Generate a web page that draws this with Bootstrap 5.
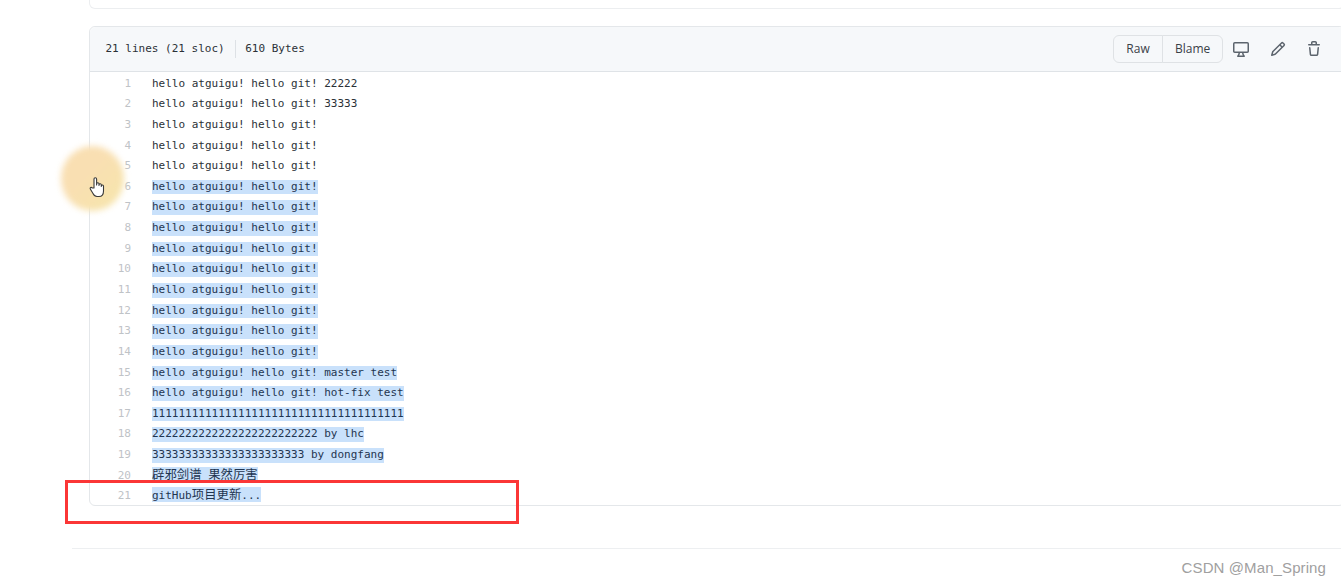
<!DOCTYPE html>
<html lang="zh">
<head>
<meta charset="utf-8">
<title>file</title>
<link href="https://cdn.jsdelivr.net/npm/bootstrap@5.3.0/dist/css/bootstrap.min.css" rel="stylesheet">
<style>
html,body{height:586px;overflow:hidden;background:#fff}
.gh-mono{font-family:"DejaVu Sans Mono","Liberation Mono","Noto Sans CJK SC",monospace;font-size:11px;color:#2b3137}
.gh-stub{height:9px;margin-left:89px;margin-right:-4px;border:1px solid #eceef0;border-top:0;border-radius:0 0 6px 6px;margin-bottom:17px}
.gh-box{margin-left:89px;margin-right:-4px;height:480px;border:1px solid #e4e7ea;border-radius:6px 6px 6px 6px}
.gh-head{height:45px;background:#f6f8fa;border-bottom:1px solid #dfe3e7;border-radius:6px 6px 0 0;padding-left:15.5px;padding-right:22px}
.gh-sep{width:1px;height:18px;background:#dde1e5;margin:0 9.500px 0 10px}
.gh-btns .btn{font-family:"Open Sans","Liberation Sans",sans-serif;font-size:12px;line-height:18px;padding:4px 12px;color:#3a4047;background:#f6f8fa;border-color:#dfe2e5;height:28px}
.gh-btns .btn:first-child{width:50px;border-radius:6px 0 0 6px}
.gh-btns .btn:last-child{width:61px;border-radius:0 6px 6px 0}
.gh-tool{width:16px;height:16px;fill:#5c646d;display:block}
.gh-tools{gap:20.3px;margin-left:10.4px}
.gh-code{padding-top:1.6px}
.gh-line{height:20.65px;line-height:20.65px;white-space:pre}
.gh-no{width:41px;text-align:right;color:#bfc3c7;margin-right:21px;flex:none}
.gh-sel{background:#c9e1fb;color:#1f3550;display:inline-block;line-height:14.5px;height:14.5px}
.gh-sel b,.gh-plain b{font-weight:400;font-family:"Noto Sans CJK SC",sans-serif;font-size:12.4px}
.gh-rule{height:1px;background:#edeff1;margin-left:72px;margin-top:42px}
.gh-water{font-family:"Liberation Sans",Arial,sans-serif;font-size:15px;line-height:18px;color:#a0a0a0;padding-right:15px;margin-top:10px;text-align:right;letter-spacing:.1px}
.gh-redbox{position:absolute;left:65px;top:480px;width:454px;height:44px;border:3px solid #fb3636}
.gh-spot{position:absolute;left:61px;top:146px;width:63px;height:65px;border-radius:50%;background:linear-gradient(135deg,#f9dfb2 40%,#f6e6ab 100%);filter:blur(3px)}
.gh-hand{position:absolute;left:89px;top:176px;width:16px;height:22px}
</style>
</head>
<body>
<div class="gh-stub"></div>
<div class="gh-box gh-mono">
  <div class="gh-head d-flex align-items-center">
    <span>21 lines (21 sloc)</span><span class="gh-sep"></span><span>610 Bytes</span>
    <div class="btn-group gh-btns ms-auto" role="group">
      <button type="button" class="btn">Raw</button>
      <button type="button" class="btn">Blame</button>
    </div>
    <div class="d-flex gh-tools">
      <svg class="gh-tool" viewBox="0 0 16 16"><path fill-rule="evenodd" d="M1.75 2.5h12.5a.25.25 0 01.25.25v7.5a.25.25 0 01-.25.25H1.75a.25.25 0 01-.25-.25v-7.5a.25.25 0 01.25-.25zM14.25 1H1.75A1.75 1.75 0 000 2.75v7.5C0 11.216.784 12 1.75 12h3.727c-.1 1.041-.52 1.872-1.292 2.757A.75.75 0 004.75 16h6.5a.75.75 0 00.565-1.243c-.772-.885-1.192-1.716-1.292-2.757h3.727A1.75 1.75 0 0016 10.25v-7.5A1.75 1.75 0 0014.25 1zM9.018 12H6.982a5.72 5.72 0 01-.765 2.5h3.566a5.72 5.72 0 01-.765-2.5z"/></svg>
      <svg class="gh-tool" viewBox="0 0 16 16"><path fill-rule="evenodd" d="M11.013 1.427a1.75 1.75 0 012.474 0l1.086 1.086a1.75 1.75 0 010 2.474l-8.61 8.61c-.21.21-.47.364-.756.445l-3.251.93a.75.75 0 01-.927-.928l.929-3.25a1.75 1.75 0 01.445-.758l8.61-8.61zm1.414 1.06a.25.25 0 00-.354 0L10.811 3.75l1.439 1.44 1.263-1.263a.25.25 0 000-.354l-1.086-1.086zM11.189 6.25L9.75 4.81l-6.286 6.287a.25.25 0 00-.064.108l-.558 1.953 1.953-.558a.249.249 0 00.108-.064l6.286-6.286z"/></svg>
      <svg class="gh-tool" viewBox="0 0 16 16"><path fill-rule="evenodd" d="M6.5 1.75a.25.25 0 01.25-.25h2.5a.25.25 0 01.25.25V3h-3V1.75zm4.5 0V3h2.25a.75.75 0 010 1.5H2.75a.75.75 0 010-1.5H5V1.75C5 .784 5.784 0 6.75 0h2.5C10.216 0 11 .784 11 1.75zM4.496 6.675a.75.75 0 10-1.492.15l.66 6.6A1.75 1.75 0 005.405 15h5.19c.9 0 1.652-.681 1.741-1.576l.66-6.6a.75.75 0 00-1.492-.149l-.66 6.6a.25.25 0 01-.249.225h-5.19a.25.25 0 01-.249-.225l-.66-6.6z"/></svg>
    </div>
  </div>
  <div class="gh-code">
    <div class="d-flex gh-line"><span class="gh-no">1</span><span>hello atguigu! hello git! 22222</span></div>
    <div class="d-flex gh-line"><span class="gh-no">2</span><span>hello atguigu! hello git! 33333</span></div>
    <div class="d-flex gh-line"><span class="gh-no">3</span><span>hello atguigu! hello git!</span></div>
    <div class="d-flex gh-line"><span class="gh-no">4</span><span>hello atguigu! hello git!</span></div>
    <div class="d-flex gh-line"><span class="gh-no">5</span><span>hello atguigu! hello git!</span></div>
    <div class="d-flex gh-line"><span class="gh-no">6</span><span><span class="gh-sel">hello atguigu! hello git!</span></span></div>
    <div class="d-flex gh-line"><span class="gh-no">7</span><span><span class="gh-sel">hello atguigu! hello git!</span></span></div>
    <div class="d-flex gh-line"><span class="gh-no">8</span><span><span class="gh-sel">hello atguigu! hello git!</span></span></div>
    <div class="d-flex gh-line"><span class="gh-no">9</span><span><span class="gh-sel">hello atguigu! hello git!</span></span></div>
    <div class="d-flex gh-line"><span class="gh-no">10</span><span><span class="gh-sel">hello atguigu! hello git!</span></span></div>
    <div class="d-flex gh-line"><span class="gh-no">11</span><span><span class="gh-sel">hello atguigu! hello git!</span></span></div>
    <div class="d-flex gh-line"><span class="gh-no">12</span><span><span class="gh-sel">hello atguigu! hello git!</span></span></div>
    <div class="d-flex gh-line"><span class="gh-no">13</span><span><span class="gh-sel">hello atguigu! hello git!</span></span></div>
    <div class="d-flex gh-line"><span class="gh-no">14</span><span><span class="gh-sel">hello atguigu! hello git!</span></span></div>
    <div class="d-flex gh-line"><span class="gh-no">15</span><span><span class="gh-sel">hello atguigu! hello git! master test</span></span></div>
    <div class="d-flex gh-line"><span class="gh-no">16</span><span><span class="gh-sel">hello atguigu! hello git! hot-fix test</span></span></div>
    <div class="d-flex gh-line"><span class="gh-no">17</span><span><span class="gh-sel">11111111111111111111111111111111111111</span></span></div>
    <div class="d-flex gh-line"><span class="gh-no">18</span><span><span class="gh-sel">2222222222222222222222222 by lhc</span></span></div>
    <div class="d-flex gh-line"><span class="gh-no">19</span><span><span class="gh-sel">33333333333333333333333 by dongfang</span></span></div>
    <div class="d-flex gh-line"><span class="gh-no">20</span><span><span class="gh-sel"><b>辟邪剑谱</b> <b>果然厉害</b></span></span></div>
    <div class="d-flex gh-line"><span class="gh-no">21</span><span><span class="gh-sel">gitHub<b>项目更新</b>...</span></span></div>
  </div>
</div>
<div class="gh-rule"></div>
<div class="gh-water">CSDN @Man_Spring</div>
<div class="gh-spot"></div>
<svg class="gh-hand" viewBox="0 0 16 22"><path d="M5 12V3a1.3 1.3 0 012.6 0v6l.1-1.5a1.2 1.2 0 012.3.2V9.500l.1-1a1.150 1.150 0 012.200.300V10.500l.1-.8a1.100 1.100 0 012.100.300V15c0 3-1.500 5.500-4.500 5.500H8c-2 0-3-1-4-3L1.300 13c-.7-1.200 1-2.200 1.900-1.100z" fill="#fff" stroke="#3a3a3a" stroke-width="1.100" stroke-linejoin="round"/></svg>
<div class="gh-redbox"></div>
<script src="https://cdn.jsdelivr.net/npm/bootstrap@5.3.0/dist/js/bootstrap.bundle.min.js"></script>
</body>
</html>
